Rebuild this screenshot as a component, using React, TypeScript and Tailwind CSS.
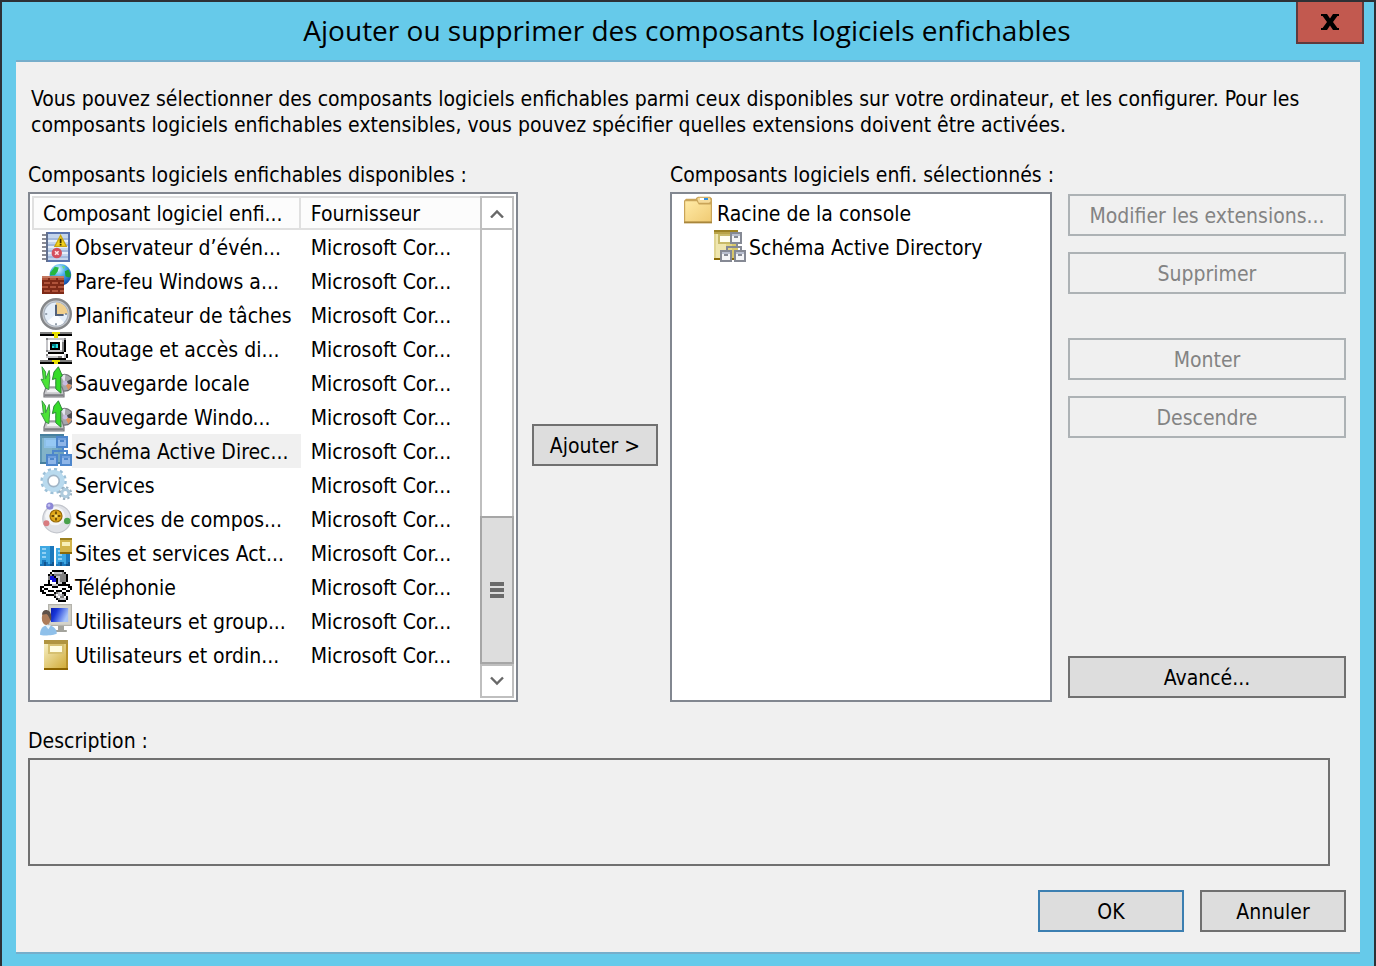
import clsx from "clsx";
import type { ReactNode } from "react";

const palette: Record<string, string> = {
  k: "#000000",
  w: "#ffffff",
  g: "#808080",
  s: "#c4c4c8",
  y: "#e8e000",
  t: "#008890",
  c: "#30e0e0",
  b: "#1010d8",
  B: "#1b78bd",
  l: "#3fa8e2",
  a: "#8fd0f4",
  n: "#12568f",
};

// Each string is one row of a 16x16 icon, one letter per pixel.
const routingRows = [
  "ggggggyyyygggggg",
  "kkkkkkkyykkkkkkk",
  ".......yy.......",
  "...gssssssssg...",
  "...swwwwwwwsk...",
  "...swkkkkkwgk...",
  "...swkttckwgk...",
  "...swkctckwgk...",
  "...swkkkkkwgk...",
  "...gsssssssgk...",
  "....kkkkkkkk....",
  "...gwwwwwwwwsk..",
  "...ssssssggwsk..",
  "....kkkkkkkkk...",
  "ggggggyyyygggggg",
  "kkkkkkkyykkkkkkk",
];

const phoneRows = [
  "......kkkkkk....",
  ".....kwssssgk...",
  "....kgkggggggk..",
  "....gbbkssgggk..",
  "....gbbbksgggk..",
  "....kwbbksgggk..",
  "....kwwwksskk...",
  "..kkkkssskkkkkk.",
  "kkwwwwkkkwwwwwkk",
  "kwkkwwwwwwwkkwwk",
  "kkwwkkkwkkkwwkk.",
  ".kkwwwwkgswkk...",
  "...kkkkgwssgk...",
  ".......kswggwk..",
  "........kgsssk..",
  ".........kkkk...",
];

const buildingRows = [
  "................",
  "................",
  "................",
  "................",
  "................",
  "lllllBB.........",
  "laallBB.llll....",
  "lllllBB.laal....",
  "laallBB.llll....",
  "lllllBB.laallBB.",
  "laallBB.lllllBB.",
  "lllllBB.laallBB.",
  "lBBllBB.lllllBB.",
  "lBnBlBn.lBnBlBn.",
  "BBnBBnn.BBnBBnn.",
  "................",
];

function Icon({ children, crisp }: { children: ReactNode; crisp?: boolean }) {
  return (
    <svg
      viewBox="0 0 16 16"
      className="size-8 shrink-0"
      shapeRendering={crisp ? "crispEdges" : "auto"}
      aria-hidden="true"
    >
      {children}
    </svg>
  );
}

function Pixels({ rows }: { rows: string[] }) {
  return (
    <>
      {rows.map((row, y) =>
        row
          .split("")
          .map((key, x) =>
            palette[key] ? (
              <rect key={`${x}-${y}`} x={x} y={y} width={1} height={1} fill={palette[key]} />
            ) : null,
          ),
      )}
    </>
  );
}

function EventIcon() {
  return (
    <Icon>
      <rect x="3" y="1" width="12" height="15" fill="#5a74ae" />
      <rect x="4" y="2" width="10" height="13" fill="#c3d4ec" />
      <path d="M4 4.5h10M4 7.5h10M4 10.5h10M4 13.5h10" stroke="#a3b9dc" strokeWidth="1" />
      <path d="M4 5.5h10M4 8.5h10M4 11.5h10" stroke="#e6eef9" strokeWidth="1" />
      <path d="M1 2.5h2M1 4.5h2M1 6.5h2M1 8.5h2M1 10.5h2M1 12.5h2M1 14.5h2" stroke="#8c8c94" strokeWidth="1" />
      <path d="M3.5 1v15" stroke="#62708e" strokeWidth="1" />
      <path d="M10.3 2.6 13.2 8.2H7.4Z" fill="#f2d21c" stroke="#c9a412" strokeWidth="0.6" />
      <path d="M10.3 4.4v2.2M10.3 7v.8" stroke="#3a3200" strokeWidth="0.9" />
      <circle cx="8.4" cy="11.5" r="2.6" fill="#d4505c" />
      <path d="m7.5 10.6 1.8 1.8m0-1.8-1.8 1.8" stroke="#ffe4e4" strokeWidth="0.8" />
    </Icon>
  );
}

function FirewallIcon() {
  return (
    <Icon>
      <defs>
        <radialGradient id="globe" cx="0.4" cy="0.25" r="0.8">
          <stop offset="0" stopColor="#e2f8ff" />
          <stop offset="0.4" stopColor="#4fb0ec" />
          <stop offset="1" stopColor="#0c46a8" />
        </radialGradient>
      </defs>
      <circle cx="10.2" cy="5.4" r="5.4" fill="url(#globe)" />
      <path d="M5.2 4.2 7.4 1.4l2 .4-.6 2-1.4 1.8H5Z" fill="#25b840" />
      <path d="m12.4 3.6 1.8-.8 1.3 2.8-.8 1.2-1.9-.6Z" fill="#1da238" />
      <path d="m11 1 1.6.3-.8 1.2Z" fill="#6fdf70" />
      <rect x="1" y="6" width="11" height="9" fill="#7e2a17" />
      <path
        d="M1 7h3v1H1zM5 7h3v1H5zM9 7h3v1H9zM2 9h3v1H2zM6 9h3v1H6zM10 9h2v1h-2zM1 11h3v1H1zM5 11h3v1H5zM9 11h3v1H9zM2 13h3v1H2zM6 13h3v1H6zM10 13h2v1h-2z"
        fill="#b0533a"
      />
      <rect x="1" y="6" width="11" height="1" fill="#c47860" />
    </Icon>
  );
}

function ClockIcon() {
  return (
    <Icon>
      <circle cx="8" cy="8" r="7.4" fill="#c9ccd0" stroke="#85878a" strokeWidth="1.2" />
      <circle cx="8" cy="8" r="6" fill="#e4eef9" stroke="#aab4c0" strokeWidth="0.6" />
      <path d="M8 8V2.2A5.8 5.8 0 0 1 13.8 8Z" fill="#f0cf8c" />
      <path d="M3.6 11.8A5.8 5.8 0 0 0 12 12.2L8 8Z" fill="#fbfdff" />
      <path d="M8 3.4V8.5h3.8" stroke="#52617a" strokeWidth="1" fill="none" />
      <path d="M8 12.6v1M2.6 8h1M12.5 8h1" stroke="#7a8796" strokeWidth="0.8" />
    </Icon>
  );
}

function BackupIcon() {
  return (
    <Icon>
      <circle cx="12.3" cy="8.4" r="4.2" fill="#a6a6ac" stroke="#6e6e74" strokeWidth="0.6" />
      <path d="M12.3 8.4 16 6.2v3.2Z" fill="#4c4c52" />
      <path d="M12.3 8.4 15.8 9.6l-1.6 2.4Z" fill="#e0905c" />
      <path d="m12.3 8.4-2-3.6 2.4-.5Z" fill="#e6e6f0" />
      <circle cx="12.6" cy="8.6" r="1.2" fill="#c8bce0" />
      <path d="M3 10.5h8l1 3v2H2v-2Z" fill="#c9c9cd" stroke="#77777c" strokeWidth="0.6" />
      <path d="M4 11.5h5l.6 1.6H3.4Z" fill="#f2f2f4" />
      <path d="M2.2 14.6h9.6" stroke="#7f7f84" strokeWidth="1" />
      <path
        d="M1 .4 2.8 3v3.4L4.6 2.2l.3 3.6-.5 6-1.6-.8L.5 6.6l1.2.2Z"
        fill="#4be436"
        stroke="#3c9a44"
        strokeWidth="0.5"
      />
      <path
        d="M9.2.4 11.2 5l-.9.4.2 8.2-2.6-2.2V6.2l-1.7.6L7 3Z"
        fill="#35dc28"
        stroke="#2c8a36"
        strokeWidth="0.5"
      />
    </Icon>
  );
}

function SchemaIcon({ selected }: { selected?: boolean }) {
  const line = selected ? "#4d86cc" : "#858994";
  const card = selected ? "#8fb6e8" : "#f4f5f8";
  const cardTop = selected ? "#6f9fdc" : "#b9bfd0";
  return (
    <Icon crisp>
      <rect x="0" y="0" width="12" height="15" fill={selected ? "#6fa3bd" : "#d8c76a"} />
      <rect x="0" y="0" width="12" height="1" fill={selected ? "#47809f" : "#9c8324"} />
      <rect x="0" y="1" width="12" height="1" fill={selected ? "#5d93ae" : "#b9a448"} />
      <rect x="0" y="2" width="1" height="12" fill={selected ? "#5f97b4" : "#e0d592"} />
      <rect x="1" y="2" width="5" height="12" fill={selected ? "#82b3c8" : "#efe6ae"} />
      <rect x="6" y="2" width="3" height="12" fill={selected ? "#78abc3" : "#e3d685"} />
      <rect x="0" y="14" width="12" height="1" fill={selected ? "#47809f" : "#8a6a08"} />
      <rect x="2" y="2" width="6" height="5" fill={selected ? "#8cc0e8" : "#c8ba68"} />
      <rect x="3" y="3" width="5" height="3" fill={selected ? "#96c8f4" : "#fffff0"} />
      <path d="M11 7h1v1h-1zM6 8h8v1H6zM6 9h1v1H6zM13 9h1v1h-1z" fill={line} />
      {[
        [8, 1],
        [3, 10],
        [10, 10],
      ].map(([x, y]) => (
        <g key={x}>
          <rect x={x} y={y} width="6" height="6" fill={line} />
          <rect x={x + 1} y={y + 1} width="4" height="4" fill={card} />
          <rect x={x + 1} y={y + 1} width="4" height="1" fill={cardTop} />
          <rect x={x + 2} y={y + 2} width="2" height="1" fill={line} />
        </g>
      ))}
    </Icon>
  );
}

function ServicesIcon() {
  return (
    <Icon>
      <circle cx="6.8" cy="6.5" r="5.8" fill="none" stroke="#9cc0d8" strokeWidth="1.6" strokeDasharray="1.5 1.54" />
      <circle cx="6.8" cy="6.5" r="4.2" fill="none" stroke="#b9daee" strokeWidth="2.6" />
      <circle cx="6.8" cy="6.5" r="2.8" fill="#ffffff" stroke="#9fb4c6" strokeWidth="0.8" />
      <circle cx="12.7" cy="12.6" r="2.8" fill="none" stroke="#9cb2c2" strokeWidth="1.2" strokeDasharray="1.1 1.1" />
      <circle cx="12.7" cy="12.6" r="1.8" fill="#ffffff" stroke="#aecbdd" strokeWidth="1.5" />
    </Icon>
  );
}

function ComponentsIcon() {
  return (
    <Icon>
      <circle cx="8.4" cy="8.4" r="7" fill="#dfe1e6" stroke="#c2c5cc" strokeWidth="0.6" />
      <ellipse cx="7.5" cy="7" rx="5" ry="4.6" fill="#f4f5f7" />
      <circle cx="8" cy="7" r="3" fill="#e0a81a" stroke="#9a6c08" strokeWidth="0.6" />
      <path d="M8 4.8v4.4M5.8 7h4.4" stroke="#6e4a04" strokeWidth="0.9" />
      <circle cx="8" cy="7" r="0.9" fill="#ffe060" />
      <circle cx="4.9" cy="2.1" r="1.8" fill="#8c88d6" />
      <circle cx="4.5" cy="1.7" r="0.7" fill="#c4c2f0" />
      <circle cx="3.2" cy="10.6" r="1.5" fill="#d97c80" />
      <circle cx="13.6" cy="9.5" r="1.6" fill="#49a14c" />
    </Icon>
  );
}

function SitesIcon() {
  return (
    <Icon crisp>
      <Pixels rows={buildingRows} />
      <rect x="10" y="1" width="6" height="8" fill="#d2b44c" />
      <rect x="10" y="1" width="6" height="1" fill="#9c8020" />
      <rect x="10" y="8" width="6" height="1" fill="#8a6808" />
      <rect x="11" y="3" width="4" height="2" fill="#f8efb8" />
    </Icon>
  );
}

function GroupIcon() {
  return (
    <Icon>
      <defs>
        <linearGradient id="screen" x1="0" y1="0" x2="1" y2="0.4">
          <stop offset="0" stopColor="#0a1cae" />
          <stop offset="0.35" stopColor="#1836d8" />
          <stop offset="1" stopColor="#a8c4fa" />
        </linearGradient>
      </defs>
      <rect x="4" y="0" width="12" height="11" fill="#b4b3ac" />
      <rect x="4.6" y="0.6" width="10.8" height="9.8" fill="#d4d3ca" />
      <rect x="5.5" y="2" width="8.6" height="7" fill="url(#screen)" />
      <path d="M9 11h3v2h1.4v1H8v-1h1Z" fill="#a3a39c" />
      <path d="M0 15.4c0-3 1.4-4.8 4-4.8s4.4 1.8 4.4 4.2c-1 .9-7.4 1.4-8.4.6Z" fill="#8fc0ea" />
      <path d="m2.6 10.6 1.6 2 1.2-2Z" fill="#e8f4fc" />
      <ellipse cx="3.1" cy="7" rx="2.2" ry="3.5" fill="#ad7c5a" />
      <path d="M1 5.4C1 3.2 2.6 2.6 4 3.2c1.6.6 2 3 1.4 5.4C4.6 7 4.2 5.4 3.2 5Z" fill="#5e5048" />
    </Icon>
  );
}

function BookIcon() {
  return (
    <Icon crisp>
      <defs>
        <linearGradient id="book" x1="0" y1="0" x2="1" y2="1">
          <stop offset="0" stopColor="#f6eec0" />
          <stop offset="1" stopColor="#cfa934" />
        </linearGradient>
      </defs>
      <rect x="2" y="1" width="12" height="15" fill="#8c6400" />
      <rect x="2" y="1" width="12" height="2" fill="#b09440" />
      <rect x="2" y="3" width="12" height="12" fill="url(#book)" />
      <rect x="13" y="3" width="1" height="12" fill="#b8922c" />
      <rect x="4" y="3" width="8" height="5" fill="#d6c070" />
      <rect x="5" y="4" width="6" height="3" fill="#fffce0" />
    </Icon>
  );
}

function FolderIcon() {
  return (
    <Icon>
      <defs>
        <linearGradient id="folder" x1="0" y1="0" x2="1" y2="1">
          <stop offset="0" stopColor="#ffeaa6" />
          <stop offset="1" stopColor="#f0cb74" />
        </linearGradient>
      </defs>
      <path d="M1 2.4 2 1.4h5V1L8 .4h6l1 .8v12.4H1Z" fill="#c9a458" />
      <path d="M1.6 2.6h5.8l1 1.6h6V12.8H1.6Z" fill="url(#folder)" />
      <path d="M7.6 1.4 8.4.9h5.4l.6 1.6-.8.9H8.4Z" fill="#f6dc9a" />
      <rect x="9" y="1" width="4" height="1" fill="#fff" />
      <rect x="11" y="1" width="2" height="1" fill="#2f8fe0" />
      <path d="M1 13.2h14" stroke="#a8863c" strokeWidth="0.8" />
    </Icon>
  );
}

const snapIns = [
  { name: "Observateur d’évén...", icon: <EventIcon /> },
  { name: "Pare-feu Windows a...", icon: <FirewallIcon /> },
  { name: "Planificateur de tâches", icon: <ClockIcon /> },
  { name: "Routage et accès di...", icon: <Icon crisp><Pixels rows={routingRows} /></Icon> },
  { name: "Sauvegarde locale", icon: <BackupIcon /> },
  { name: "Sauvegarde Windo...", icon: <BackupIcon /> },
  { name: "Schéma Active Direc...", icon: <SchemaIcon selected />, selected: true },
  { name: "Services", icon: <ServicesIcon /> },
  { name: "Services de compos...", icon: <ComponentsIcon /> },
  { name: "Sites et services Act...", icon: <SitesIcon /> },
  { name: "Téléphonie", icon: <Icon crisp><Pixels rows={phoneRows} /></Icon> },
  { name: "Utilisateurs et group...", icon: <GroupIcon /> },
  { name: "Utilisateurs et ordin...", icon: <BookIcon /> },
];

function DialogButton({
  children,
  className,
  disabled,
  primary,
}: {
  children: ReactNode;
  className?: string;
  disabled?: boolean;
  primary?: boolean;
}) {
  return (
    <button
      type="button"
      disabled={disabled}
      className={clsx(
        "h-[42px] shrink-0 border-2 pt-0.5 text-center leading-6 whitespace-nowrap",
        disabled && "border-[#adb2b5] bg-[#f0f0f0] text-[#838383]",
        !disabled && "bg-[#dddddd]",
        !disabled && (primary ? "border-[#3c7fb1]" : "border-[#707070]"),
        className,
      )}
    >
      {children}
    </button>
  );
}

function ScrollArrow({ label, d }: { label: string; d: string }) {
  return (
    <button
      type="button"
      aria-label={label}
      className="flex h-[34px] items-center justify-center border-2 border-[#bfbfbf] bg-white"
    >
      <svg viewBox="0 0 14 10" className="h-2.5 w-3.5" fill="none" stroke="#686868" strokeWidth="2.4">
        <path d={d} />
      </svg>
    </button>
  );
}

function ScrollBar() {
  return (
    <div className="flex w-[34px] shrink-0 flex-col">
      <ScrollArrow label="Défiler vers le haut" d="M1 9.5 7 3.5l6 6" />
      <div className="flex-1 border-x-2 border-[#bfbfbf] bg-white" />
      <div className="flex h-[148px] flex-col items-center justify-center gap-0.5 border-2 border-[#a6a6a6] bg-[#dddddd]">
        <span className="h-1 w-3.5 bg-[#6a6a6a]" />
        <span className="h-1 w-3.5 bg-[#6a6a6a]" />
        <span className="h-1 w-3.5 bg-[#6a6a6a]" />
      </div>
      <ScrollArrow label="Défiler vers le bas" d="M1 1.5l6 6 6-6" />
    </div>
  );
}

function AvailableList() {
  return (
    <div className="flex flex-1 border-2 border-[#828790] bg-white p-0.5">
      <div className="min-w-0 flex-1">
        <table aria-labelledby="available" className="w-full table-fixed border-separate border-spacing-0">
          <thead>
            <tr className="h-[34px] text-left whitespace-nowrap">
              <th className="w-3/5 border-2 border-[#e0e0e0] bg-[#fcfcfc] p-0 pt-0.5 pl-[9px] font-normal">
                Composant logiciel enfi...
              </th>
              <th className="border-y-2 border-[#e0e0e0] bg-[#fcfcfc] p-0 pt-0.5 pl-2.5 font-normal">
                Fournisseur
              </th>
            </tr>
          </thead>
          <tbody>
            {snapIns.map((item) => (
              <tr key={item.name} className="h-[34px]">
                <td className="p-0 pl-2">
                  <div className="flex items-start">
                    {item.icon}
                    <span
                      className={clsx(
                        "min-w-0 flex-1 overflow-hidden pt-0.5 pl-[3px] leading-8 whitespace-nowrap",
                        item.selected && "bg-[#f0f0f0]",
                      )}
                    >
                      {item.name}
                    </span>
                  </div>
                </td>
                <td className="overflow-hidden p-0 pt-0.5 pl-2.5 leading-8 whitespace-nowrap">Microsoft Cor...</td>
              </tr>
            ))}
          </tbody>
        </table>
      </div>
      <ScrollBar />
    </div>
  );
}

function TreeRow({ icon, children }: { icon: ReactNode; children: ReactNode }) {
  return (
    <div className="flex items-start gap-[3px] leading-8">
      {icon}
      <span className="pt-0.5">{children}</span>
    </div>
  );
}

function SelectedTree() {
  return (
    <ul aria-labelledby="selected" className="flex-1 border-2 border-[#828790] bg-white px-2.5 py-0.5">
      <li>
        <TreeRow icon={<FolderIcon />}>Racine de la console</TreeRow>
        <ul className="pl-8">
          <li>
            <TreeRow icon={<SchemaIcon />}>Schéma Active Directory</TreeRow>
          </li>
        </ul>
      </li>
    </ul>
  );
}

export default function App() {
  return (
    <div className="flex min-h-screen flex-col border-x-2 border-t-2 border-[#2d3035] bg-[#66caea] font-['DejaVu_Sans_Condensed','DejaVu_Sans',sans-serif] text-[21px] leading-6 text-black">
      <header className="grid grid-cols-[1fr_auto_1fr] items-start pr-2.5">
        <h1 className="col-start-2 mb-0.5 pl-2 font-['Open_Sans',sans-serif] text-[28px] leading-[56px]">
          Ajouter ou supprimer des composants logiciels enfichables
        </h1>
        <button
          type="button"
          aria-label="Fermer"
          className="flex h-[42px] w-[68px] items-center justify-center justify-self-end border-x-2 border-b-2 border-[#5f3a3c] bg-[#c2594f]"
        >
          <svg viewBox="0 0 18 16" className="h-4 w-[18px]" fill="#000">
            <path d="M0 0h6l3 4.6L12 0h6v2h-1.6L12 8l4.4 6H18v2h-6l-3-4.6L6 16H0v-2h1.6L6 8 1.6 2H0Z" />
          </svg>
        </button>
      </header>

      <main className="mx-3.5 mb-3 flex flex-1 flex-col border-y-2 border-[#76aecb] bg-[#f0f0f0] pt-6 pr-3.5 pb-5 pl-3">
        <p className="px-[3px] leading-[26px]">
          Vous pouvez sélectionner des composants logiciels enfichables parmi ceux disponibles sur votre ordinateur, et
          les configurer. Pour les composants logiciels enfichables extensibles, vous pouvez spécifier quelles
          extensions doivent être activées.
        </p>

        <div className="mt-[25px] flex flex-1">
          <section className="flex min-w-0 flex-[490] flex-col gap-[5px]">
            <h2 id="available" className="whitespace-nowrap">
              Composants logiciels enfichables disponibles :
            </h2>
            <AvailableList />
          </section>

          <div className="mr-3 ml-3.5 flex items-center pt-[25px]">
            <DialogButton className="w-[126px]">Ajouter &gt;</DialogButton>
          </div>

          <section className="flex min-w-0 flex-[382] flex-col gap-[5px]">
            <h2 id="selected" className="whitespace-nowrap">
              Composants logiciels enfi. sélectionnés :
            </h2>
            <SelectedTree />
          </section>

          <div className="ml-4 flex w-[278px] shrink-0 flex-col gap-4 pt-[31px] pb-1">
            <DialogButton disabled>Modifier les extensions...</DialogButton>
            <DialogButton disabled>Supprimer</DialogButton>
            <DialogButton disabled className="mt-7">
              Monter
            </DialogButton>
            <DialogButton disabled>Descendre</DialogButton>
            <DialogButton className="mt-auto">Avancé...</DialogButton>
          </div>
        </div>

        <label htmlFor="description" className="mt-[27px]">
          Description :
        </label>
        <textarea
          id="description"
          readOnly
          className="mt-[5px] mr-4 h-[108px] resize-none border-2 border-[#707070] bg-transparent p-2 outline-none"
        />

        <footer className="mt-6 flex justify-end gap-4">
          <DialogButton primary className="w-[146px]">
            OK
          </DialogButton>
          <DialogButton className="w-[146px]">Annuler</DialogButton>
        </footer>
      </main>
    </div>
  );
}
